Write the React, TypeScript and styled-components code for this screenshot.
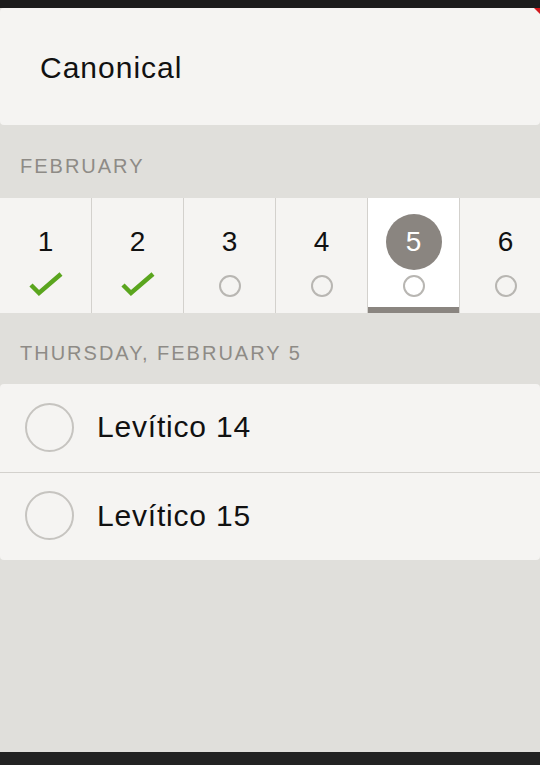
import styled, { createGlobalStyle } from "styled-components";

const GlobalStyle = createGlobalStyle`
  html, body {
    margin: 0;
    padding: 0;
    background: #e0dfdb;
  }
  body {
    font-family: "Liberation Sans", Arial, sans-serif;
  }
`;

const Screen = styled.div`
  width: 540px;
  height: 765px;
  display: flex;
  flex-direction: column;
  background: #e0dfdb;
  overflow: hidden;
  position: relative;
`;

const TopBar = styled.div`
  height: 8px;
  background: #1c1c1c;
  flex-shrink: 0;
`;

const Corner = styled.div`
  position: absolute;
  top: 8px;
  right: 0;
  width: 0;
  height: 0;
  border-top: 6px solid #d2191e;
  border-left: 6px solid transparent;
`;

const TitleCard = styled.div`
  height: 117px;
  background: #f5f4f2;
  border-radius: 4px;
  display: flex;
  align-items: center;
  padding-left: 40px;
  padding-top: 2px;
  box-sizing: border-box;
  font-size: 30px;
  letter-spacing: 1px;
  color: #111;
  flex-shrink: 0;
`;

const SectionLabel = styled.div<{ $height: number }>`
  height: ${(p) => p.$height}px;
  display: flex;
  align-items: center;
  padding-left: 20px;
  padding-top: 10px;
  box-sizing: border-box;
  font-size: 20px;
  letter-spacing: 2px;
  color: #8e8b86;
  text-transform: uppercase;
  flex-shrink: 0;
`;

const DayStrip = styled.div`
  height: 115px;
  display: grid;
  grid-template-columns: repeat(6, 92px);
  background: #f5f4f2;
  flex-shrink: 0;
`;

const DayCell = styled.div<{ $selected?: boolean }>`
  position: relative;
  display: flex;
  flex-direction: column;
  align-items: center;
  border-right: 1px solid #d3d1cd;
  background: ${(p) => (p.$selected ? "#ffffff" : "#f5f4f2")};
  box-sizing: border-box;
  ${(p) =>
    p.$selected &&
    `
    border-left: 1px solid #d3d1cd;
    margin-left: -1px;
    &::after {
      content: "";
      position: absolute;
      left: 0;
      right: 0;
      bottom: 0;
      height: 6px;
      background: #8a8580;
    }
  `}
`;

const DayNumber = styled.div<{ $selected?: boolean }>`
  margin-top: 16px;
  width: 56px;
  height: 56px;
  border-radius: 50%;
  display: flex;
  align-items: center;
  justify-content: center;
  font-size: 28px;
  color: ${(p) => (p.$selected ? "#ffffff" : "#111")};
  background: ${(p) => (p.$selected ? "#8a8580" : "transparent")};
`;

const StatusSlot = styled.div`
  height: 28px;
  display: flex;
  align-items: center;
  justify-content: center;
`;

const SmallCircle = styled.div`
  width: 22px;
  height: 22px;
  border: 2px solid #b8b6b2;
  border-radius: 50%;
  box-sizing: border-box;
  margin-top: 3px;
`;

const ReadingList = styled.div`
  background: #f5f4f2;
  border-radius: 4px;
  display: flex;
  flex-direction: column;
  flex-shrink: 0;
`;

const ReadingRow = styled.div`
  height: 88px;
  display: flex;
  align-items: center;
  padding-left: 25px;
  box-sizing: border-box;
  & + & {
    border-top: 1px solid #d3d1cd;
  }
`;

const RowCircle = styled.div`
  width: 49px;
  height: 49px;
  border: 2px solid #c6c4c0;
  border-radius: 50%;
  box-sizing: border-box;
  margin-right: 23px;
  margin-top: -2px;
`;

const RowText = styled.div`
  font-size: 30px;
  letter-spacing: 0.8px;
  color: #111;
  margin-top: -2px;
`;

const Filler = styled.div`
  flex: 1;
`;

const BottomBar = styled.div`
  height: 13px;
  background: #222222;
  flex-shrink: 0;
`;

const Check = () => (
  <svg width="36" height="26" viewBox="0 0 36 26">
    <path d="M3 14 L11 22 L33 3" fill="none" stroke="#5aa51e" strokeWidth="4.5" />
  </svg>
);

const days = [
  { n: 1, done: true },
  { n: 2, done: true },
  { n: 3, done: false },
  { n: 4, done: false },
  { n: 5, done: false, selected: true },
  { n: 6, done: false },
];

const readings = ["Levítico 14", "Levítico 15"];

export default function App() {
  return (
    <Screen>
      <GlobalStyle />
      <TopBar />
      <Corner />
      <TitleCard>Canonical</TitleCard>
      <SectionLabel $height={73}>February</SectionLabel>
      <DayStrip>
        {days.map((d) => (
          <DayCell key={d.n} $selected={d.selected}>
            <DayNumber $selected={d.selected}>{d.n}</DayNumber>
            <StatusSlot>{d.done ? <Check /> : <SmallCircle />}</StatusSlot>
          </DayCell>
        ))}
      </DayStrip>
      <SectionLabel $height={71}>Thursday, February 5</SectionLabel>
      <ReadingList>
        {readings.map((r) => (
          <ReadingRow key={r}>
            <RowCircle />
            <RowText>{r}</RowText>
          </ReadingRow>
        ))}
      </ReadingList>
      <Filler />
      <BottomBar />
    </Screen>
  );
}
